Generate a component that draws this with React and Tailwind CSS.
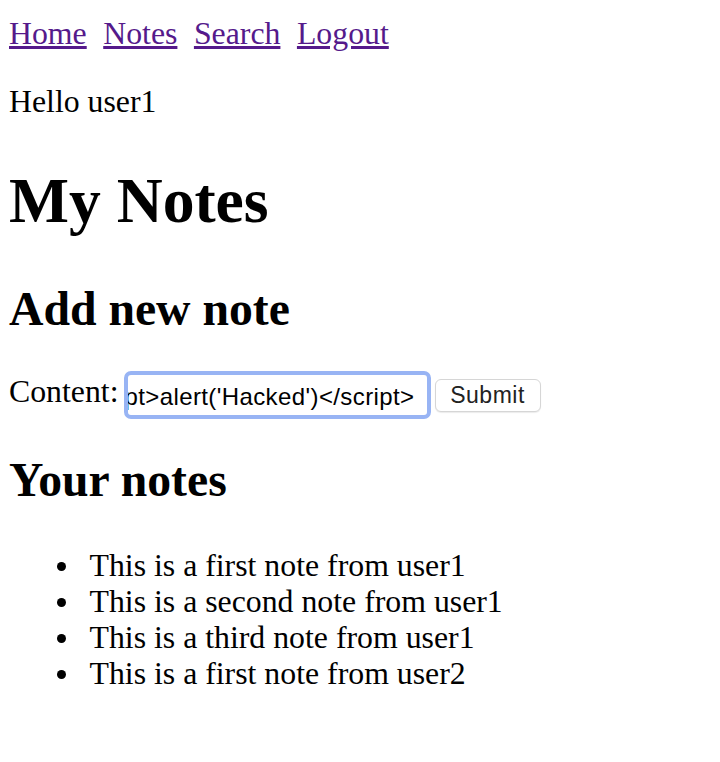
const links = ['Home', 'Notes', 'Search', 'Logout'];

const notes = [
  'This is a first note from user1',
  'This is a second note from user1',
  'This is a third note from user1',
  'This is a first note from user2',
];

const App = () => {
  return (
    <div className="min-h-screen bg-white pl-[9px] pt-[16px] text-black font-['Liberation_Serif','Times_New_Roman',serif] text-[31.8px] leading-[36px]">
      <nav className="flex">
        {links.map(link => (
          <a key={link} href="#" className="mr-[16.5px] text-[#551a8b] underline">
            {link}
          </a>
        ))}
      </nav>

      <p className="mt-[32px]">Hello user1</p>

      <h1 className="mt-[45px] text-[63.6px] leading-[72px] font-bold">My Notes</h1>

      <h2 className="mt-[45px] text-[47.7px] leading-[54px] font-bold">Add new note</h2>

      <form className="mt-[35px] flex items-start" onSubmit={e => e.preventDefault()}>
        <label className="mt-[3px]">Content:</label>
        <div className="ml-[5px] h-[48px] w-[307px] overflow-hidden rounded-[7px] border-[4px] border-[#98b4f4] bg-white">
          <div className="flex h-full justify-end overflow-hidden pr-[12px] pt-[2px] whitespace-nowrap font-['Liberation_Sans',Arial,sans-serif] text-[24px] tracking-[0.4px] leading-[40px] text-black">
            <span>{"<script>alert('Hacked')</script>"}</span>
          </div>
        </div>
        <button
          type="submit"
          className="ml-[4px] mt-[8px] h-[33px] w-[106px] rounded-[6px] border border-[#d6d6d6] bg-white font-['Liberation_Sans',Arial,sans-serif] text-[23px] tracking-[0.5px] leading-[31px] text-[#222] shadow-[0_1px_1px_rgba(0,0,0,0.08)]"
        >
          Submit
        </button>
      </form>

      <h2 className="mt-[34px] text-[47.7px] leading-[54px] font-bold">Your notes</h2>

      <ul className="mt-[41px] pl-[48px]">
        {notes.map(note => (
          <li key={note} className="flex items-start">
            <span className="mt-[14px] h-[8.5px] w-[8.5px] shrink-0 rounded-full bg-black"></span>
            <span className="ml-[24px]">{note}</span>
          </li>
        ))}
      </ul>
    </div>
  );
};

export default App;
